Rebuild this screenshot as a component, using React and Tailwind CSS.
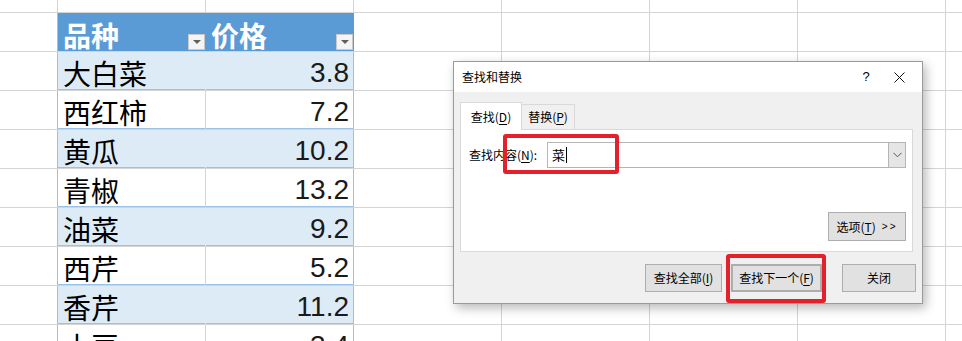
import React from 'react';

const rows = [
  { name: '大白菜', price: '3.8', band: true },
  { name: '西红柿', price: '7.2', band: false },
  { name: '黄瓜', price: '10.2', band: true },
  { name: '青椒', price: '13.2', band: false },
  { name: '油菜', price: '9.2', band: true },
  { name: '西芹', price: '5.2', band: false },
  { name: '香芹', price: '11.2', band: true },
  { name: '土豆', price: '3.4', band: false },
];

const cjk = { fontFamily: '"Noto Sans CJK SC", "Noto Sans", sans-serif' };
const num = { fontFamily: '"Liberation Sans", Arial, sans-serif' };

const FilterButton = () => (
  <div className="w-[17px] h-[16px] bg-[#f4f4f4] border border-[#c9c9c9] flex items-center justify-center">
    <div className="w-0 h-0 border-l-[4px] border-r-[4px] border-t-[4px] border-l-transparent border-r-transparent border-t-[#5f5f5f]" />
  </div>
);

const BlankCells = () => (
  <>
    <div className="w-[148px] shrink-0 border-r border-[#d4d4d4]" />
    <div className="w-[148px] shrink-0 border-r border-[#d4d4d4]" />
    <div className="w-[148px] shrink-0 border-r border-[#d4d4d4]" />
    <div className="w-[148px] shrink-0 border-r border-[#d4d4d4]" />
    <div className="w-[20px] shrink-0" />
  </>
);

const Sheet = () => (
  <div className="flex flex-col">
    {/* partial top row */}
    <div className="flex h-[13px] border-b border-[#d4d4d4]">
      <div className="w-[58px] shrink-0 border-r border-[#d4d4d4]" />
      <div className="w-[148px] shrink-0 border-r border-[#d4d4d4]" />
      <div className="w-[148px] shrink-0 border-r border-[#d4d4d4]" />
      <BlankCells />
    </div>

    {/* header */}
    <div className="flex h-[39px] border-b border-[#d4d4d4]">
      <div className="w-[58px] shrink-0 border-r border-[#9bc2e6]" />
      <div className="w-[148px] shrink-0 bg-[#5b9bd5] border-r border-[#5b9bd5] flex items-end justify-between pl-[5px] pr-0 pb-[1px]" style={cjk}>
        <span className="text-[28px] leading-none font-bold text-white pb-[1px]">品种</span>
        <FilterButton />
      </div>
      <div className="w-[148px] shrink-0 bg-[#5b9bd5] border-r border-[#5b9bd5] flex items-end justify-between pl-[5px] pr-0 pb-[1px]" style={cjk}>
        <span className="text-[28px] leading-none font-bold text-white pb-[1px]">价格</span>
        <FilterButton />
      </div>
      <BlankCells />
    </div>

    {rows.map((r) => (
      <div key={r.name} className="flex h-[39px] border-b border-[#d4d4d4]">
        <div className="w-[58px] shrink-0 border-r border-[#9bc2e6]" />
        <div className={r.band
          ? 'w-[148px] shrink-0 bg-[#ddebf7] border-r border-[#ddebf7] shadow-[inset_0_-1px_0_#9bc2e6] flex items-end pl-[5px] pb-[3px]'
          : 'w-[148px] shrink-0 bg-white border-r border-[#d4d4d4] shadow-[inset_0_-1px_0_#9bc2e6] flex items-end pl-[5px] pb-[3px]'} style={cjk}>
          <span className="text-[28px] leading-none text-black">{r.name}</span>
        </div>
        <div className={r.band
          ? 'w-[148px] shrink-0 bg-[#ddebf7] border-r border-[#9bc2e6] shadow-[inset_0_-1px_0_#9bc2e6] flex items-end justify-end pr-[4px] pb-[3px]'
          : 'w-[148px] shrink-0 bg-white border-r border-[#9bc2e6] shadow-[inset_0_-1px_0_#9bc2e6] flex items-end justify-end pr-[4px] pb-[3px]'} style={num}>
          <span className="text-[28px] leading-none text-[#1a1a1a]">{r.price}</span>
        </div>
        <BlankCells />
      </div>
    ))}
  </div>
);

const U = ({ children }) => <span className="underline underline-offset-2">{children}</span>;

const Btn = ({ className, children }) => (
  <div className={`h-[28px] bg-[#e1e1e1] border border-[#adadad] flex items-center justify-center text-[12px] text-black ${className}`}>
    {children}
  </div>
);

const Dialog = () => (
  <div className="absolute left-[453px] top-[61px] w-[470px] h-[243px] bg-[#f0f0f0] border border-[#9a9a9a] shadow-[3px_4px_10px_rgba(0,0,0,0.28)] flex flex-col" style={cjk}>
    {/* title bar */}
    <div className="h-[30px] bg-white flex items-center pl-[8px] shrink-0">
      <span className="text-[12px] text-black flex-1">查找和替换</span>
      <span className="text-[13px] text-black w-[20px] text-center" style={num}>?</span>
      <div className="w-[46px] flex items-center justify-center">
        <svg width="11" height="11" viewBox="0 0 11 11">
          <path d="M0.5 0.5L10.5 10.5M10.5 0.5L0.5 10.5" stroke="#111" strokeWidth="1" />
        </svg>
      </div>
    </div>

    <div className="flex flex-col pl-[6px] pr-[9px] pt-[10px]">
      {/* tabs */}
      <div className="flex items-end h-[27px]">
        <div className="h-[28px] w-[62px] bg-white border border-b-0 border-[#d9d9d9] flex items-center justify-center text-[12px] text-black relative z-10 -mb-px">
          查找(<U>D</U>)
        </div>
        <div className="h-[25px] w-[53px] bg-[#f0f0f0] border border-l-0 border-b-0 border-[#d9d9d9] flex items-center justify-center text-[12px] text-black">
          替换(<U>P</U>)
        </div>
      </div>

      {/* panel */}
      <div className="h-[123px] bg-white border border-[#d9d9d9] flex flex-col pl-[8px] pr-[6px] pt-[12px]">
        <div className="flex items-center h-[26px]">
          <span className="text-[12px] text-black w-[78px]">查找内容(<U>N</U>):</span>
          <div className="flex-1 h-[26px] border border-[#b5b5b5] bg-white flex items-center pl-[4px]">
            <span className="text-[13px] text-black">菜</span>
            <span className="w-px h-[16px] bg-black ml-px" />
          </div>
          <div className="w-[17px] h-[26px] bg-[#e5e5e5] border border-l-0 border-[#b5b5b5] flex items-center justify-center">
            <svg width="9" height="6" viewBox="0 0 9 6">
              <path d="M0.5 0.8L4.5 4.8L8.5 0.8" stroke="#555" strokeWidth="1" fill="none" />
            </svg>
          </div>
        </div>
        <div className="flex-1 flex items-end justify-end pb-[10px]">
          <Btn className="w-[78px] h-[29px] gap-[6px]">
            <span>选项(<U>T</U>)</span>
            <span className="text-[10px] tracking-[2px]" style={num}>&gt;&gt;</span>
          </Btn>
        </div>
      </div>
    </div>

    {/* bottom buttons */}
    <div className="flex justify-end items-center pr-[6px] mt-[12px]">
      <Btn className="w-[77px]">查找全部(<U>I</U>)</Btn>
      <Btn className="w-[91px] ml-[9px] border-2 border-[#0078d7]">查找下一个(<U>F</U>)</Btn>
      <Btn className="w-[74px] ml-[20px]">关闭</Btn>
    </div>
  </div>
);

export default function App() {
  return (
    <div className="relative w-[962px] h-[341px] overflow-hidden bg-white">
      <Sheet />
      <Dialog />
      {/* red highlight boxes */}
      <div className="absolute left-[503px] top-[134px] w-[116px] h-[40px] border-[4px] border-[#e3212b] rounded-[3px]" />
      <div className="absolute left-[726px] top-[254px] w-[100px] h-[49px] border-[4px] border-[#e3212b] rounded-[3px]" />
    </div>
  );
}
